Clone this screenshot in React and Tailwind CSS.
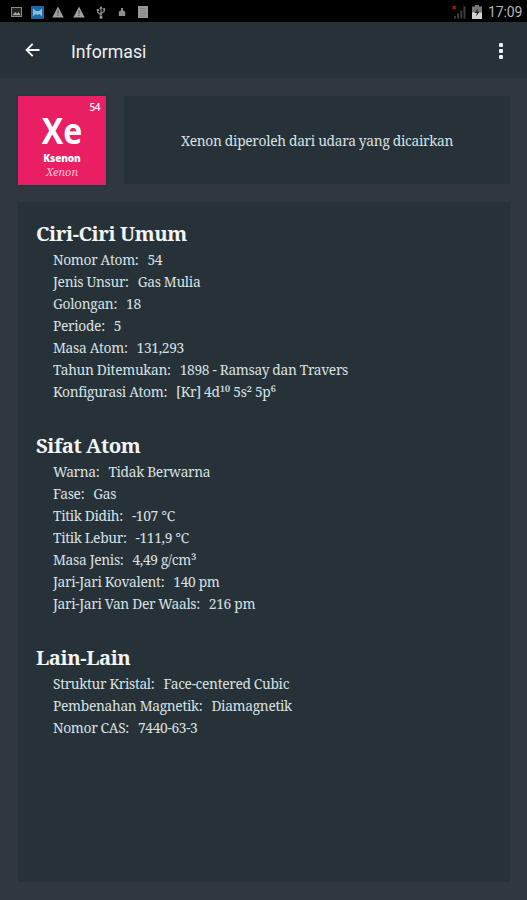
const SECTIONS = [
  {
    title: "Ciri-Ciri Umum",
    rows: [
      ["Nomor Atom:", "54"],
      ["Jenis Unsur:", "Gas Mulia"],
      ["Golongan:", "18"],
      ["Periode:", "5"],
      ["Masa Atom:", "131,293"],
      ["Tahun Ditemukan:", "1898 - Ramsay dan Travers"],
      ["Konfigurasi Atom:", "[Kr] 4d¹⁰ 5s² 5p⁶"],
    ],
  },
  {
    title: "Sifat Atom",
    rows: [
      ["Warna:", "Tidak Berwarna"],
      ["Fase:", "Gas"],
      ["Titik Didih:", "-107 ℃"],
      ["Titik Lebur:", "-111,9 ℃"],
      ["Masa Jenis:", "4,49 g/cm³"],
      ["Jari-Jari Kovalent:", "140 pm"],
      ["Jari-Jari Van Der Waals:", "216 pm"],
    ],
  },
  {
    title: "Lain-Lain",
    rows: [
      ["Struktur Kristal:", "Face-centered Cubic"],
      ["Pembenahan Magnetik:", "Diamagnetik"],
      ["Nomor CAS:", "7440-63-3"],
    ],
  },
];

function WarningIcon() {
  return (
    <svg width="12" height="12" viewBox="0 0 12 12">
      <path d="M6 0.5 11.7 11.5H0.3Z" fill="#a0a0a0" />
      <path d="M6 4.3V7.7M6 8.7V10" stroke="#555" strokeWidth="1.2" />
    </svg>
  );
}

function StatusBar() {
  return (
    <div className="flex h-[22px] shrink-0 items-center justify-between bg-black pl-[11px] pr-[4px] pt-[2px]">
      <div className="flex items-center">
        <svg width="11" height="10" viewBox="0 0 11 10">
          <rect x="0.5" y="0.5" width="10" height="9" fill="#222" stroke="#898989" />
          <path d="M1.5 8.2 4 5l2 1.8L7.7 5 9.7 8.2Z" fill="#aaa" />
        </svg>
        <svg className="ml-[9px]" width="13" height="13" viewBox="0 0 13 13">
          <rect width="13" height="13" rx="1" fill="#1c6aa5" />
          <path d="M2 2.5 5 5h3l3-2.5v8L8.5 8 6.5 9 4.5 8 2 10.5Z" fill="#8cbbdc" />
        </svg>
        <span className="ml-[8px]"><WarningIcon /></span>
        <span className="ml-[9px]"><WarningIcon /></span>
        <svg className="ml-[11px]" width="10" height="13" viewBox="0 0 10 13" fill="none" stroke="#999" strokeWidth="1.2">
          <path d="M5 2v9M5 9 1.8 6.5V4M5 7.5 8.2 5.5V3.2" />
          <path d="M5 0 6.8 2.8H3.2Z" fill="#999" stroke="none" />
          <circle cx="5" cy="11.3" r="1.5" fill="#999" stroke="none" />
          <path d="M0.8 4h2M7.2 3.3h2" strokeWidth="2" />
        </svg>
        <svg className="ml-[12px]" width="8" height="10" viewBox="0 0 8 10" fill="#8f8f8f">
          <path d="M3 1h2v3H3ZM0.8 4.5h6.4V9H0.8Z" />
          <path d="M1.8 3.6h4.4v1.4H1.8Z" />
        </svg>
        <svg className="ml-[12px]" width="10" height="12" viewBox="0 0 10 12">
          <rect width="10" height="12" fill="#989898" />
          <path d="M2 2.5h6M2 5h6M2 7.5h6M2 10h6" stroke="#858585" />
        </svg>
      </div>
      <div className="flex items-center">
        <svg width="15" height="14" viewBox="0 0 15 14">
          <path d="M2 11h2v2.5H2ZM5 8.5h2v5H5ZM8.3 5.5h2v8h-2ZM11.5 1.5h2v12h-2Z" fill="#3c3c3c" />
          <path d="M0.5 1 4 4.2M4 1 0.5 4.2" stroke="#a8180c" strokeWidth="1.4" />
        </svg>
        <svg className="ml-[5px]" width="10" height="14" viewBox="0 0 10 14">
          <path d="M3 0h4v1.5h3V14H0V1.5h3Z" fill="#777" />
          <path d="M0 7.5h10V14H0Z" fill="#d2d2d2" />
          <path d="M5.8 3 2.8 8h2L4.2 11.5 7.5 6.5H5.3Z" fill="#222" />
        </svg>
        <span className="ml-[6px] w-[35px] whitespace-nowrap font-['Roboto'] text-[14px] leading-[20px] tracking-[-0.1px] text-[#b5b5b5]">
          17:09
        </span>
      </div>
    </div>
  );
}

function AppBar() {
  return (
    <header className="flex h-[56px] shrink-0 items-center bg-[#263238]">
      <svg className="ml-[25px]" width="15" height="14" viewBox="0 0 15 14" fill="none" stroke="#f5f7f8" strokeWidth="1.9">
        <path d="M14.5 7H1.8M7.7 0.9 1.6 7l6.1 6.1" />
      </svg>
      <h1 className="ml-[31px] pt-[3px] font-['Roboto'] text-[17.7px] leading-6 text-[#eceff1]">Informasi</h1>
      <div className="ml-auto mr-[24px] mt-[2px] flex flex-col gap-[2px]">
        <span className="h-[4px] w-[4px] rounded-[1px] bg-[#eceff1]" />
        <span className="h-[4px] w-[4px] rounded-[1px] bg-[#eceff1]" />
        <span className="h-[4px] w-[4px] rounded-[1px] bg-[#eceff1]" />
      </div>
    </header>
  );
}

function ElementTile() {
  return (
    <div className="flex h-[89px] w-[88px] shrink-0 flex-col items-center bg-[#e91e63] font-['Open_Sans'] text-white shadow-[0_0_1px_1px_#1c3a40]">
      <span className="mr-[6px] mt-[5px] self-end text-[10px] font-semibold leading-[12px] tracking-[-0.5px]">54</span>
      <span className="h-[39px] origin-center scale-x-[0.88] text-[36.5px] font-bold leading-[35px]">Xe</span>
      <span className="text-[10px] font-extrabold leading-[13px] tracking-[-0.1px]">Ksenon</span>
      <span className="font-['Noto_Serif','Liberation_Serif',serif] text-[11px] italic leading-[14px] text-[#ffc2d6]">Xenon</span>
    </div>
  );
}

function Section({ title, rows }) {
  return (
    <section>
      <h2 className="h-[30px] text-[20.3px] font-bold leading-[29px] tracking-[-0.45px] text-[#f0f4f5]">{title}</h2>
      <dl className="pl-[17px] text-[13.8px] leading-[22px] tracking-[-0.33px]">
        {rows.map(([label, value]) => (
          <div key={label} className="flex h-[22px] gap-[9px] whitespace-nowrap">
            <dt>{label}</dt>
            <dd>{value}</dd>
          </div>
        ))}
      </dl>
    </section>
  );
}

export default function App() {
  return (
    <div className="flex h-[900px] w-[527px] flex-col overflow-hidden bg-[#30383e] font-['Noto_Serif','Droid_Serif','DejaVu_Serif_Condensed','DejaVu_Serif',serif] text-[#d8e0e3]">
      <StatusBar />
      <AppBar />
      <main className="flex flex-1 flex-col gap-[17px] px-[18px] pb-[18px] pt-[18px]">
        <div className="flex gap-[18px]">
          <ElementTile />
          <div className="mb-px mr-[-1px] flex flex-1 items-center justify-center bg-[#263238] text-[13.8px] tracking-[-0.31px]">
            <p className="pt-[2px]">Xenon diperoleh dari udara yang dicairkan</p>
          </div>
        </div>
        <div className="mr-[-1px] flex flex-1 flex-col gap-[28px] bg-[#263238] pl-[18px] pt-[17px]">
          {SECTIONS.map((section) => (
            <Section key={section.title} {...section} />
          ))}
        </div>
      </main>
    </div>
  );
}
